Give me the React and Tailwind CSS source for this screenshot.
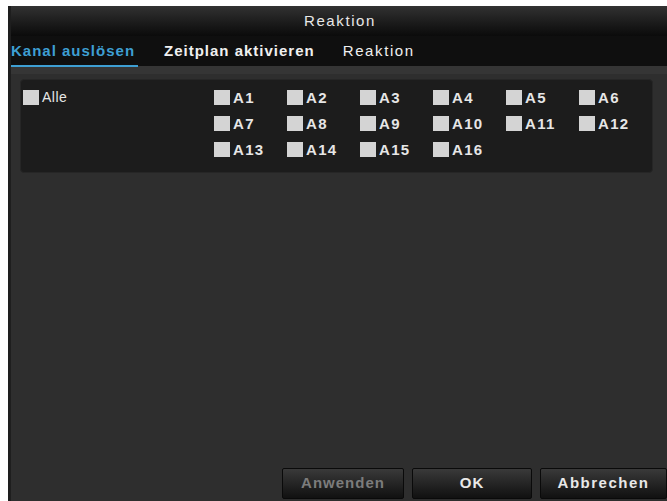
export default function App() {
  const rows = [
    ["A1", "A2", "A3", "A4", "A5", "A6"],
    ["A7", "A8", "A9", "A10", "A11", "A12"],
    ["A13", "A14", "A15", "A16"],
  ];
  const Box = () => <span className="inline-block w-[16px] h-[15px] bg-[#d4d4d4] shrink-0" />;
  return (
    <div className="w-[667px] h-[501px] bg-white pt-[6px] pl-[8px] overflow-hidden" style={{ fontFamily: '"Liberation Sans", Arial, sans-serif' }}>
      <div className="w-full h-full flex flex-col bg-[#2e2e2e] border-l-[3px] border-[#1e1e1e]">
        <div className="h-[30px] shrink-0 flex items-center justify-center bg-gradient-to-b from-[#323232] to-[#0b0b0b] text-[#e8e8e8] text-[15px] tracking-[1.6px] pl-[2px]">
          Reaktion
        </div>
        <div className="h-[30px] shrink-0 flex items-center bg-[#0f0f0f] text-[15px] tracking-[1px]">
          <div className="relative text-[#3e9fd3] w-[127px] pt-[1px] font-bold">
            Kanal auslösen
            <span className="absolute left-0 right-[0px] bottom-[-4px] h-[2px] bg-[#3e9fd3]" />
          </div>
          <div className="ml-[26px] text-[#f0f0f0] font-bold">Zeitplan aktivieren</div>
          <div className="ml-[28px] text-[#f0f0f0] tracking-[1.6px]">Reaktion</div>
        </div>
        <div className="h-[8px] shrink-0 bg-[#353535]" />
        <div className="flex-1 flex flex-col pl-[9px] pr-[14px]">
          <div className="mt-[5px] h-[94px] rounded-[4px] bg-[#1c1c1c] border border-[#262626] flex">
            <div className="w-[200px] pl-[2px] pt-[10px] flex items-start gap-[3px] text-[14px] text-[#e6e6e6] tracking-[0.5px]">
              <Box />
              <span className="leading-[15px]">Alle</span>
            </div>
            <div className="pt-[10px] flex flex-col gap-[11px]">
              {rows.map((r, i) => (
                <div key={i} className="flex">
                  {r.map((a) => (
                    <div key={a} className="w-[73px] flex items-center gap-[3px] text-[15px] font-bold text-[#e6e6e6] leading-[15px] tracking-[1.3px]">
                      <Box />
                      <span>{a}</span>
                    </div>
                  ))}
                </div>
              ))}
            </div>
          </div>
          <div className="flex-1" />
          <div className="flex justify-end gap-[8px] mb-[2px] mr-[-14px]">
            <button className="w-[122px] h-[31px] bg-gradient-to-b from-[#3a3a3a] to-[#111] border border-[#0a0a0a] rounded-[2px] text-[15px] font-bold tracking-[1px] text-[#7c7c7c]">Anwenden</button>
            <button className="w-[120px] h-[31px] bg-gradient-to-b from-[#3a3a3a] to-[#111] border border-[#0a0a0a] rounded-[2px] text-[15px] font-bold tracking-[1px] text-[#e8e8e8]">OK</button>
            <button className="w-[127px] h-[31px] bg-gradient-to-b from-[#3a3a3a] to-[#111] border border-[#0a0a0a] rounded-[2px] text-[15px] font-bold tracking-[1.5px] text-[#e8e8e8]">Abbrechen</button>
          </div>
        </div>
      </div>
    </div>
  );
}
